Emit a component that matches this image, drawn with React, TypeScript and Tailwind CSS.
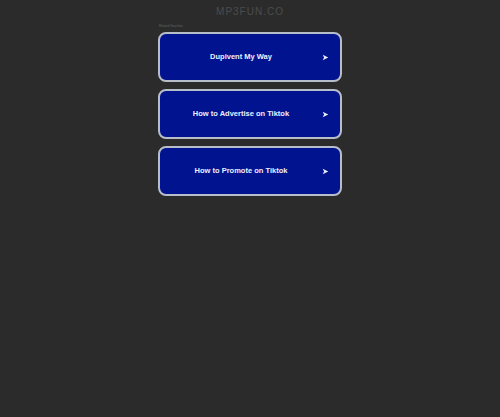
export default function App() {
  const links = ["Dupivent My Way", "How to Advertise on Tiktok", "How to Promote on Tiktok"];
  return (
    <main className="min-h-[417px] w-full bg-[#2b2b2b] flex flex-col items-center" style={{ fontFamily: "Arial, 'Liberation Sans', sans-serif" }}>
      <h1 className="mt-[6px] text-[10px] leading-[12px] tracking-[1px] text-[#4b4b4b]">MP3FUN.CO</h1>
      <div className="w-[184px] mt-[6px] flex flex-col">
        <p className="text-[3px] leading-[4px] text-[#666] ml-[1px]">Related Searches</p>
        <div className="mt-[4px] flex flex-col gap-[7px]">
          {links.map((l) => (
            <a
              key={l}
              href="#"
              className="h-[50px] rounded-[8px] border-2 border-[#b7bdc9] bg-[#02138f] flex items-center pl-[8px] pr-[11px] text-[#eef0ff]"
            >
              <span className="flex-1 text-center text-[7.5px] font-bold">{l}</span>
              <svg className="ml-[8px]" width="7" height="7" viewBox="0 0 10 10">
                <path d="M1 1 L9 5 L1 9 L3 5 Z" fill="#e8ecff" />
              </svg>
            </a>
          ))}
        </div>
      </div>
    </main>
  );
}
